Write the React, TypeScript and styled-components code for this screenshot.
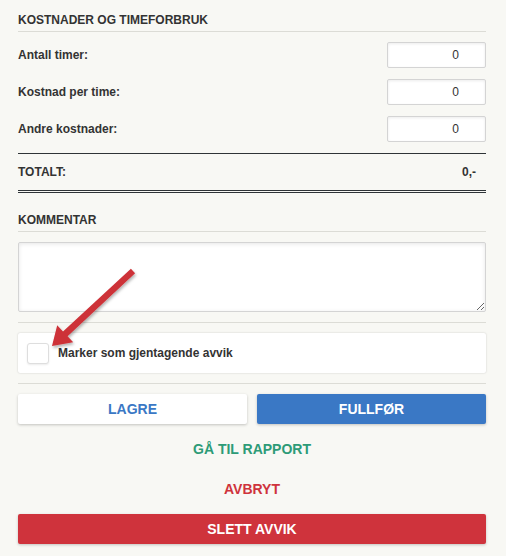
import React from 'react';
import styled, { createGlobalStyle } from 'styled-components';

const GlobalStyle = createGlobalStyle`
  html, body {
    margin: 0;
    padding: 0;
    background: #f8f8f4;
  }
  body {
    font-family: 'Liberation Sans', Arial, sans-serif;
    color: #333;
  }
`;

const Page = styled.div`
  position: relative;
  display: flex;
  flex-direction: column;
  padding: 13px 20px 12px 18px;
`;

const SectionTitle = styled.div<{ gap?: number }>`
  font-size: 12px;
  font-weight: bold;
  line-height: 14px;
  text-transform: uppercase;
  padding-bottom: 4px;
  border-bottom: 1px solid #dcdcd6;
  margin-bottom: ${({ gap }) => gap ?? 10}px;
`;

const FieldRow = styled.div`
  display: flex;
  align-items: center;
  justify-content: space-between;
  margin-bottom: 11px;
`;

const Label = styled.label`
  font-size: 12px;
  font-weight: bold;
`;

const NumberInput = styled.input`
  box-sizing: border-box;
  width: 99px;
  height: 26px;
  border: 1px solid #d4d4d4;
  border-radius: 2px;
  background: #fff;
  box-shadow: inset 0 1px 3px rgba(0, 0, 0, 0.08);
  font-family: inherit;
  font-size: 12px;
  color: #333;
  text-align: right;
  padding: 0 26px 0 6px;
  outline: none;
`;

const TotalRow = styled.div`
  display: flex;
  align-items: center;
  justify-content: space-between;
  border-top: 1px solid #2f3437;
  border-bottom: 3px double #2f3437;
  height: 36px;
  font-size: 12px;
  font-weight: bold;
  padding-right: 10px;
  margin-bottom: 20px;
`;

const Comment = styled.textarea`
  box-sizing: border-box;
  width: 100%;
  height: 70px;
  border: 1px solid #d4d4d4;
  border-radius: 2px;
  background: #fff;
  box-shadow: inset 0 1px 4px rgba(0, 0, 0, 0.1);
  display: block;
  outline: none;
`;

const Divider = styled.div<{ top: number; bottom: number }>`
  height: 1px;
  background: #dcdcd6;
  margin: ${({ top, bottom }) => `${top}px 0 ${bottom}px`};
`;

const CheckCard = styled.label`
  box-sizing: border-box;
  display: flex;
  align-items: center;
  gap: 9px;
  height: 40px;
  padding: 0 9px;
  background: #fff;
  border-radius: 2px;
  box-shadow: 0 0 2px rgba(0, 0, 0, 0.2);
  font-size: 12px;
  font-weight: bold;
`;

const CheckBox = styled.span`
  box-sizing: border-box;
  width: 22px;
  height: 21px;
  border: 1px solid #dedede;
  border-radius: 3px;
  background: #fff;
  box-shadow: 0 1px 2px rgba(0, 0, 0, 0.08);
`;

const ButtonRow = styled.div`
  display: grid;
  grid-template-columns: 1fr 1fr;
  gap: 10px;
`;

const Button = styled.button<{ variant: 'light' | 'blue' | 'red' }>`
  height: 30px;
  border: none;
  border-radius: 2px;
  font-family: inherit;
  font-size: 14px;
  font-weight: bold;
  text-transform: uppercase;
  cursor: pointer;
  box-shadow: 0 1px 3px rgba(0, 0, 0, 0.22);
  background: ${({ variant }) =>
    variant === 'light' ? '#fff' : variant === 'blue' ? '#3a78c5' : '#cf333c'};
  color: ${({ variant }) => (variant === 'light' ? '#3a78c5' : '#fff')};
`;

const LinkButton = styled.button<{ color: string }>`
  height: 40px;
  border: none;
  background: none;
  font-family: inherit;
  font-size: 14px;
  font-weight: bold;
  text-transform: uppercase;
  color: ${({ color }) => color};
  cursor: pointer;
`;

const Links = styled.div`
  display: flex;
  flex-direction: column;
  padding: 5px 0;
`;

const Arrow = styled.svg`
  position: absolute;
  left: 0;
  top: 0;
  pointer-events: none;
  overflow: visible;
`;

function App() {
  return (
    <Page>
      <GlobalStyle />
      <SectionTitle>Kostnader og timeforbruk</SectionTitle>
      <FieldRow>
        <Label>Antall timer:</Label>
        <NumberInput defaultValue="0" />
      </FieldRow>
      <FieldRow>
        <Label>Kostnad per time:</Label>
        <NumberInput defaultValue="0" />
      </FieldRow>
      <FieldRow>
        <Label>Andre kostnader:</Label>
        <NumberInput defaultValue="0" />
      </FieldRow>
      <TotalRow>
        <span>TOTALT:</span>
        <span>0,-</span>
      </TotalRow>
      <SectionTitle>Kommentar</SectionTitle>
      <Comment />
      <Divider top={10} bottom={10} />
      <CheckCard>
        <CheckBox />
        Marker som gjentagende avvik
      </CheckCard>
      <Divider top={10} bottom={10} />
      <ButtonRow>
        <Button variant="light">Lagre</Button>
        <Button variant="blue">Fullfør</Button>
      </ButtonRow>
      <Links>
        <LinkButton color="#2d9b77">Gå til rapport</LinkButton>
        <LinkButton color="#cf333c">Avbryt</LinkButton>
      </Links>
      <Button variant="red">Slett avvik</Button>

      {/* annotation arrow pointing at the checkbox */}
      <Arrow width="506" height="400">
        <defs>
          <filter id="shadow" x="-20%" y="-20%" width="140%" height="140%">
            <feDropShadow dx="1" dy="2" stdDeviation="1.5" floodColor="#000" floodOpacity="0.3" />
          </filter>
        </defs>
        <polygon
          points="130.9,268.8 135.1,273.2 67.6,336.2 73.2,342.2 52,346 57.2,325.2 63,331.5"
          fill="#cd3239"
          filter="url(#shadow)"
        />
      </Arrow>
    </Page>
  );
}

export default App;
